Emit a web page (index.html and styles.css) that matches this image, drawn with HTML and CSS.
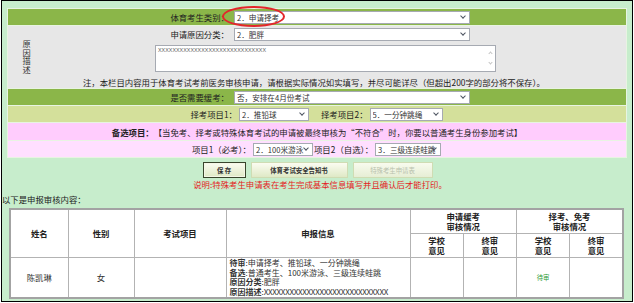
FILE: index.html
```html
<!DOCTYPE html>
<html lang="zh-CN">
<head>
    <meta charset="UTF-8">
    <meta name="viewport" content="width=device-width, initial-scale=1.0">
    <title>体育考试考前医务审核申请</title>
    <link rel="stylesheet" href="styles.css">
</head>
<body>
<div class="frame">
    <div class="mark"></div>
    <div class="form">
        <div class="row green">
            <span class="lbl">体育考生类别：</span>
            <span class="sel w-long"><select><option>2．申请择考</option></select></span>
        </div>
        <div class="reason">
            <div class="reason-title"><span>原因描述</span></div>
            <div class="reason-body">
                <div class="row">
                    <span class="lbl lbl-in">申请原因分类：</span>
                    <span class="sel w-long"><select><option>2．肥胖</option></select></span>
                </div>
                <div class="memo">
                    <textarea>XXXXXXXXXXXXXXXXXXXXXXXXXXXXXX</textarea>
                    <span class="memo-up"></span>
                    <span class="memo-down"></span>
                </div>
                <div class="note">注，本栏目内容用于体育考试考前医务审核申请，请根据实际情况如实填写，并尽可能详尽（但超出200字的部分将不保存）。</div>
            </div>
        </div>
        <div class="row green">
            <span class="lbl">是否需要缓考：</span>
            <span class="sel w-long"><select><option>否，安排在4月份考试</option></select></span>
        </div>
        <div class="row olive center">
            <span>择考项目1：</span>
            <span class="sel w-70"><select><option>2．推铅球</option></select></span>
            <span class="gap-l">择考项目2：</span>
            <span class="sel w-73"><select><option>5．一分钟跳绳</option></select></span>
        </div>
        <div class="row pink center">
            <b>备选项目：</b>【当免考、择考或特殊体育考试的申请被最终审核为“不符合”时，你要以普通考生身份参加考试】
        </div>
        <div class="row pink-light center">
            <span>项目1（必考）：</span>
            <span class="sel w-60 gap-m"><select><option>2．100米游泳</option></select></span>
            <span>项目2（自选）：</span>
            <span class="sel w-66"><select><option>3．三级连续蛙跳</option></select></span>
        </div>
    </div>

    <div class="btns">
        <button class="btn btn-save">保 存</button>
        <button class="btn btn-doc">体育考试安全告知书</button>
        <button class="btn btn-off" disabled>特殊考生申请表</button>
    </div>
    <p class="warn">说明:特殊考生申请表在考生完成基本信息填写并且确认后才能打印。</p>
    <p class="list-title">以下是申报审核内容：</p>

    <table class="audit">
        <thead>
            <tr>
                <th rowspan="2" class="c-name">姓名</th>
                <th rowspan="2" class="c-sex">性别</th>
                <th rowspan="2" class="c-item">考试项目</th>
                <th rowspan="2" class="c-info">申报信息</th>
                <th colspan="2">申请缓考<br>审核情况</th>
                <th colspan="2">择考、免考<br>审核情况</th>
            </tr>
            <tr>
                <th class="c-op1">学校<br>意见</th>
                <th class="c-op2">终审<br>意见</th>
                <th class="c-op3">学校<br>意见</th>
                <th class="c-op4">终审<br>意见</th>
            </tr>
        </thead>
        <tbody>
            <tr>
                <td>陈凯琳</td>
                <td>女</td>
                <td></td>
                <td class="info">
                    <b>待审</b>:申请择考、推铅球、一分钟跳绳<br>
                    <b>备选</b>:普通考生、100米游泳、三级连续蛙跳<br>
                    <b>原因分类</b>:肥胖<br>
                    <b>原因描述</b>:<span class="xs">XXXXXXXXXXXXXXXXXXXXXXXXXXXXX</span>
                </td>
                <td></td>
                <td></td>
                <td><span class="state">待审</span></td>
                <td></td>
            </tr>
        </tbody>
    </table>
</div>
</body>
</html>
```

FILE: styles.css
```css
* {
    box-sizing: border-box;
}
body {
    margin: 0;
    background: #fff;
    font-family: "Noto Sans CJK SC", sans-serif;
    font-size: 8.4px;
    color: #222;
}
.frame {
    position: relative;
    margin-left: 1px;
    width: 632px;
    height: 302px;
    border: 1px solid #000;
    background: #c7edcc;
    overflow: hidden;
}
.mark {
    position: absolute;
    left: 220px;
    top: 5px;
    width: 63px;
    height: 21px;
    border: 2px solid #e3262b;
    border-radius: 50%;
    z-index: 2;
}
.form {
    margin: 7px 5px 0;
    border: 1px solid #e8f4e2;
    background: #e8f4e2;
    display: flex;
    flex-direction: column;
    gap: 1px;
}
.row {
    display: flex;
    align-items: center;
    height: 16px;
    line-height: 10px;
    white-space: nowrap;
}
.row.center {
    justify-content: center;
}
.green {
    background: #8bb649;
}
.olive {
    background: #d4e09b;
}
.pink {
    background: #ffccfd;
    height: 17px;
}
.pink-light {
    background: #ffdfff;
}
.lbl {
    width: 221px;
    text-align: right;
    margin-right: 3px;
}
.lbl-in {
    width: 184px;
}
.gap-l {
    margin-left: 11px;
}
.gap-m {
    margin-left: 9px;
}

/* selects */
.sel {
    position: relative;
    display: inline-block;
    height: 13px;
    margin-left: 2px;
    margin-right: 1px;
}
.sel select {
    appearance: none;
    -webkit-appearance: none;
    width: 100%;
    height: 13px;
    border: 1px solid #a6aab2;
    border-radius: 0;
    background: #fff;
    color: #333;
    font-family: "Noto Sans CJK SC", sans-serif;
    font-size: 7.6px;
    line-height: 11px;
    padding: 0 0 0 2px;
    outline: none;
}
.sel::after {
    content: "";
    position: absolute;
    right: 5px;
    top: 3px;
    width: 3px;
    height: 3px;
    border-right: 1px solid #4d5360;
    border-bottom: 1px solid #4d5360;
    transform: rotate(45deg);
}
.w-long { width: 236px; }
.w-70 { width: 70px; }
.w-73 { width: 73px; }
.w-60 { width: 60px; }
.w-66 { width: 66px; }

/* 原因描述 */
.reason {
    display: flex;
    height: 62px;
    background: #e7e7e7;
}
.reason-title {
    width: 37px;
    display: flex;
    align-items: center;
    justify-content: center;
    color: #333;
}
.reason-title span {
    writing-mode: vertical-rl;
    text-orientation: upright;
    font-size: 8.2px;
    line-height: 10px;
    letter-spacing: 0.4px;
}
.reason-body {
    flex: 1;
}
.memo {
    position: relative;
    margin: 3px 0 0 110px;
    width: 341px;
    height: 27px;
}
.memo textarea {
    display: block;
    width: 341px;
    height: 27px;
    resize: none;
    overflow: hidden;
    border: 1px solid #a6aab2;
    padding: 1px 2px;
    font-family: "Liberation Mono", monospace;
    font-size: 6px;
    line-height: 8px;
    color: #666;
}
.memo-up, .memo-down {
    position: absolute;
    right: 4px;
    width: 3px;
    height: 3px;
    border-left: 1px solid #c5c5c5;
    border-top: 1px solid #c5c5c5;
}
.memo-up {
    top: 7px;
    transform: rotate(45deg);
}
.memo-down {
    top: 16px;
    transform: rotate(225deg);
}
.note {
    margin-top: 5px;
    padding-left: 38px;
    line-height: 10px;
    white-space: nowrap;
    color: #222;
}

/* buttons */
.btns {
    display: flex;
    justify-content: center;
    gap: 5px;
    margin-top: 4px;
    padding-left: 1px;
}
.btn {
    height: 16px;
    padding: 0;
    border: 1px solid #cfdcb3;
    background: linear-gradient(#fbfcf1, #dfe9c6);
    font-family: "Noto Sans CJK SC", sans-serif;
    font-size: 6.4px;
    font-weight: bold;
    color: #333;
    cursor: pointer;
}
.btn-save {
    width: 43px;
    border: 1px solid #39452c;
    box-shadow: inset 0 0 0 1px #f4f7e6;
}
.btn-doc {
    width: 97px;
}
.btn-off {
    width: 80px;
    font-weight: normal;
    color: #b9c1ae;
    background: linear-gradient(#f8fbee, #e6eed5);
}
.warn {
    margin: 1px 0 0;
    padding-left: 6px;
    text-align: center;
    line-height: 10px;
    color: #e4221d;
}
.list-title {
    margin: 5px 0 0;
    line-height: 10px;
    color: #222;
}

/* 审核表 */
.audit {
    margin: 4px 0 0 7px;
    width: 615px;
    border-collapse: collapse;
    border: 2px solid #a3a3a3;
    background: #fff;
    table-layout: fixed;
}
.audit th, .audit td {
    border: 1px solid #b3b3b3;
    padding: 0;
    text-align: center;
    line-height: 10px;
}
.audit thead tr {
    height: 24px;
}
.audit tbody tr {
    height: 41px;
}
.audit th {
    font-weight: bold;
    color: #222;
}
.c-name { width: 58px; }
.c-sex { width: 66px; }
.c-item { width: 92px; }
.c-info { width: 184px; }
.c-op1 { width: 53px; }
.c-op2 { width: 54px; }
.c-op3 { width: 55px; }
.c-op4 { width: 53px; }
.audit td {
    color: #333;
}
.audit td.info {
    text-align: left;
    padding-left: 3px;
    font-size: 8px;
    line-height: 9.4px;
    white-space: nowrap;
    overflow: hidden;
}
.xs {
    letter-spacing: -0.3px;
}
.state {
    font-size: 6.4px;
    color: #2d9b35;
}
```
